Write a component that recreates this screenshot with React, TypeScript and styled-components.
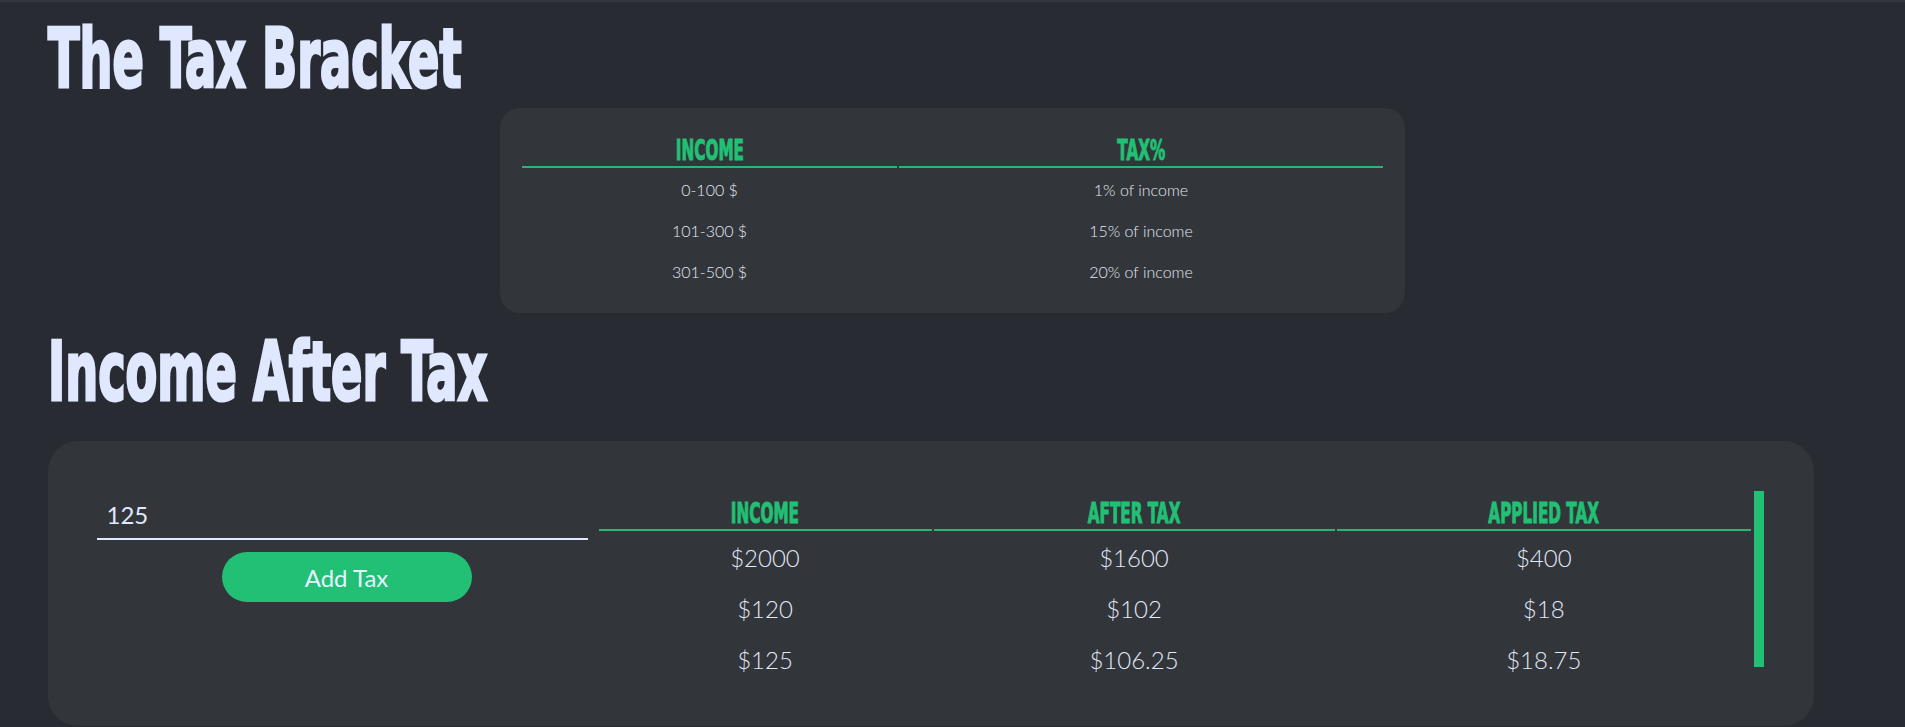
import React from "react";
import styled, { createGlobalStyle } from "styled-components";

const HEAD_FONT = `"Liberation Sans Narrow", "DejaVu Sans Condensed", "Liberation Sans", sans-serif`;
const BODY_FONT = `Lato, "Liberation Sans", sans-serif`;
const GREEN = "#21c074";
const LIGHT = "#e0e8ff";

const GlobalStyle = createGlobalStyle`
  html, body { margin: 0; padding: 0; background: #282b32; }
  body { font-family: ${BODY_FONT}; border-top: 2px solid #33363c; }
  * { box-sizing: border-box; }
`;

const Page = styled.main`
  padding: 0 48px;
  min-height: 725px;
`;

const Title = styled.h1<{ $top: number; $bottom: number }>`
  margin: ${(p) => p.$top}px 0 ${(p) => p.$bottom}px;
  font-family: ${HEAD_FONT};
  font-weight: 700;
  font-size: 82px;
  line-height: 87px;
  color: ${LIGHT};
  -webkit-text-stroke: 3px ${LIGHT};
  white-space: nowrap;
`;

const Squeeze = styled.span<{ $sx: number }>`
  display: inline-block;
  transform: scaleX(${(p) => p.$sx});
  transform-origin: center center;
  white-space: nowrap;
`;

const TitleSqueeze = styled(Squeeze)`
  transform-origin: left center;
`;

const BracketCard = styled.section`
  width: 905px;
  height: 205px;
  margin: 0 auto;
  padding: 25px 20px 0;
  background: #323539;
  border-radius: 20px;
`;

const Table = styled.table<{ $w: number }>`
  width: ${(p) => p.$w}px;
  table-layout: fixed;
  border-collapse: separate;
  border-spacing: 2px;
`;

const Col = styled.col<{ $w?: number }>`
  width: ${(p) => (p.$w ? `${p.$w}px` : "auto")};
`;

const Th = styled.th<{ $padTop?: number }>`
  padding: ${(p) => p.$padTop ?? 0}px 0 0;
  font-family: ${HEAD_FONT};
  font-weight: 700;
  font-size: 27.8px;
  line-height: 31px;
  color: ${GREEN};
  -webkit-text-stroke: 1px ${GREEN};
  text-align: center;
  border-bottom: 2px solid #29b573;
  overflow: visible;
`;

const SmallTd = styled.td`
  padding: 10px 0;
  font-family: ${BODY_FONT};
  font-weight: 300;
  font-size: 16px;
  line-height: 19px;
  color: #e0e7f7;
  text-align: center;
`;

const BigTd = styled.td`
  padding: 10px 0;
  font-family: ${BODY_FONT};
  font-weight: 300;
  font-size: 24px;
  line-height: 29px;
  color: #e0e8fa;
  text-align: center;
`;

const CalcCard = styled.section`
  width: 1766px;
  height: 285px;
  padding: 50px 50px 50px 48.5px;
  display: flex;
  background: #323539;
  border-radius: 30px;
`;

const InputColumn = styled.div`
  width: 500px;
  flex: none;
  display: flex;
  flex-direction: column;
  align-items: flex-start;
`;

const IncomeInput = styled.input`
  width: 491px;
  height: 49px;
  padding: 0 10px;
  background: transparent;
  border: none;
  border-bottom: 2px solid ${LIGHT};
  outline: none;
  font-family: ${BODY_FONT};
  font-size: 24px;
  color: ${LIGHT};
`;

const AddButton = styled.button`
  align-self: center;
  margin-top: 12px;
  width: 250px;
  height: 50px;
  border: none;
  border-radius: 25px;
  background: ${GREEN};
  font-family: ${BODY_FONT};
  font-size: 24px;
  color: #e4f4ff;
  cursor: pointer;
`;

const TableArea = styled.div`
  flex: 1;
  height: 185px;
  display: flex;
  align-items: flex-start;
  overflow: hidden;
`;

const ScrollThumb = styled.div`
  flex: none;
  width: 10px;
  height: 176px;
  margin-left: 1px;
  background: ${GREEN};
`;

const brackets = [
  ["0-100 $", "1% of income"],
  ["101-300 $", "15% of income"],
  ["301-500 $", "20% of income"],
];

const results = [
  ["$2000", "$1600", "$400"],
  ["$120", "$102", "$18"],
  ["$125", "$106.25", "$18.75"],
];

const HEAD_SX = 0.61;
const TITLE_SX = 0.627;

export default function App() {
  return (
    <>
      <GlobalStyle />
      <Page>
        <Title $top={13} $bottom={6}>
          <TitleSqueeze $sx={TITLE_SX}>The Tax Bracket</TitleSqueeze>
        </Title>
        <BracketCard>
          <Table $w={865}>
            <colgroup>
              <Col $w={375} />
              <Col $w={484} />
            </colgroup>
            <thead>
              <tr>
                <Th><Squeeze $sx={HEAD_SX}>INCOME</Squeeze></Th>
                <Th><Squeeze $sx={HEAD_SX}>TAX%</Squeeze></Th>
              </tr>
            </thead>
            <tbody>
              {brackets.map((r) => (
                <tr key={r[0]}>
                  <SmallTd>{r[0]}</SmallTd>
                  <SmallTd>{r[1]}</SmallTd>
                </tr>
              ))}
            </tbody>
          </Table>
        </BracketCard>
        <Title $top={15} $bottom={26}>
          <TitleSqueeze $sx={TITLE_SX}>Income After Tax</TitleSqueeze>
        </Title>
        <CalcCard>
          <InputColumn>
            <IncomeInput type="number" defaultValue="125" />
            <AddButton type="button">Add Tax</AddButton>
          </InputColumn>
          <TableArea>
            <Table $w={1157}>
              <colgroup>
                <Col $w={333} />
                <Col $w={401} />
                <Col />
              </colgroup>
              <thead>
                <tr>
                  <Th $padTop={5}><Squeeze $sx={HEAD_SX}>INCOME</Squeeze></Th>
                  <Th $padTop={5}><Squeeze $sx={HEAD_SX}>AFTER TAX</Squeeze></Th>
                  <Th $padTop={5}><Squeeze $sx={HEAD_SX}>APPLIED TAX</Squeeze></Th>
                </tr>
              </thead>
              <tbody>
                {results.map((r) => (
                  <tr key={r[0]}>
                    <BigTd>{r[0]}</BigTd>
                    <BigTd>{r[1]}</BigTd>
                    <BigTd>{r[2]}</BigTd>
                  </tr>
                ))}
              </tbody>
            </Table>
            <ScrollThumb />
          </TableArea>
        </CalcCard>
      </Page>
    </>
  );
}
